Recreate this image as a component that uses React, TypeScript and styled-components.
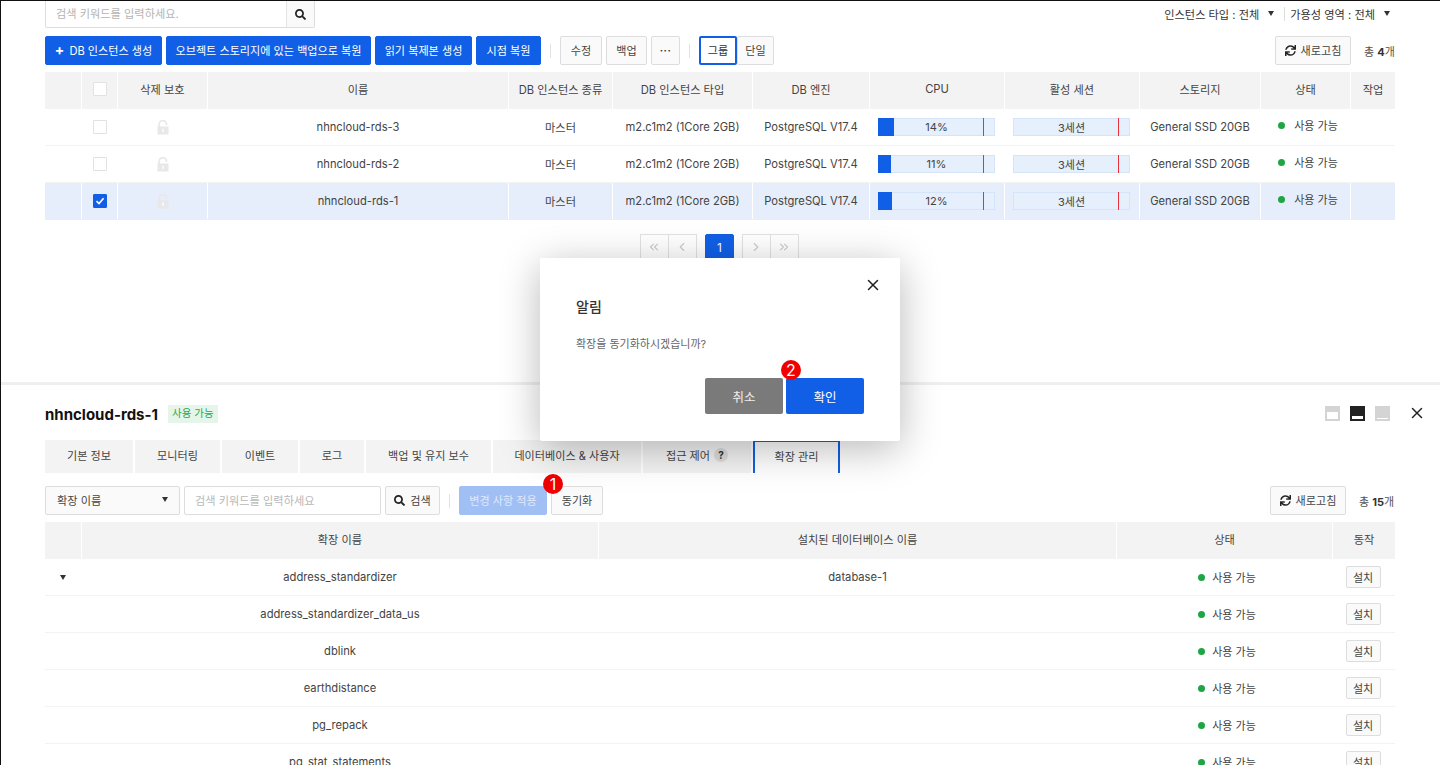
import React from 'react';
import styled, { createGlobalStyle } from 'styled-components';
import { FaSearch, FaSync } from 'react-icons/fa';
import { ChevronLeft, ChevronRight, ChevronsLeft, ChevronsRight, X } from 'lucide-react';

const GlobalStyle = createGlobalStyle`
html, body {
  margin: 0;
  padding: 0;
  background: #fff;
  overflow: hidden;
}
* {
  box-sizing: border-box;
}
body, button, input {
  font-family: Inter, "Noto Sans CJK KR", "Noto Sans", sans-serif;
  font-size: 12px;
  color: #444;
}
`;

const BLUE = '#115fe6';
const INSTANCE_COLS = '37px 36px 90px 301px 104px 140px 117px 135px 135px 121px 90px 44px';
const EXT_COLS = '37px 517px 518px 216px 62px';

const Page = styled.div`
position: relative;
width: 1440px;
height: 765px;
overflow: hidden;
border-top: 1px solid #111;
border-left: 1px solid #111;
`;

const TopPanel = styled.section`
height: 381px;
padding: 0 45px 0 44px;
`;

const SearchRow = styled.div`
display: flex;
align-items: center;
justify-content: space-between;
height: 27px;
margin-bottom: 8px;
`;

const SearchBox = styled.div`
display: flex;
width: 270px;
height: 27px;
border: 1px solid #ddd;
border-top: none;
border-radius: 0 0 2px 2px;
>input{
  flex: 1;
  min-width: 0;
  border: none;
  outline: none;
  padding: 0 10px;
  background: none;
  font-size: 11.2px;
  &::placeholder{
    color: #b4b4b4;
  }
}
>button{
  width: 28px;
  border: none;
  border-left: 1px solid #e4e4e4;
  background: #fafafa;
  display: flex;
  align-items: center;
  justify-content: center;
  color: #222;
  padding: 0;
}
`;

const Filters = styled.div`
display: flex;
align-items: center;
padding: 0 5px 2px 0;
font-size: 11.2px;
color: #333;
>span{
  display: flex;
  align-items: center;
  gap: 9px;
}
>i{
  width: 1px;
  height: 14px;
  background: #ddd;
  margin: 0 5px 0 10px;
}
`;

const Caret = styled.b`
display: inline-block;
width: 0;
height: 0;
border-left: 3.5px solid transparent;
border-right: 3.5px solid transparent;
border-top: 5px solid #333;
`;

const Toolbar = styled.div`
display: flex;
align-items: center;
gap: 4px;
height: 29px;
margin-bottom: 7px;
`;

const Btn = styled.button<{ $w: number }>`
position: relative;
flex: none;
width: ${p => p.$w}px;
height: 29px;
padding: 0 0 1px;
display: flex;
align-items: center;
justify-content: center;
gap: 5px;
background: #fafafa;
border: 1px solid #ddd;
border-radius: 2px;
font-size: 11.1px;
color: #444;
white-space: nowrap;
`;

const PrimaryBtn = styled(Btn)`
background: ${BLUE};
border-color: ${BLUE};
color: #fff;
>strong{
  font-size: 14px;
  font-weight: 700;
  line-height: 1;
}
`;

const DisabledBtn = styled(Btn)`
background: #a0bff5;
border-color: #a0bff5;
color: #dfe9fb;
`;

const ActiveBtn = styled(Btn)`
background: #fff;
border: 2px solid ${BLUE};
color: #333;
`;

const Dots = styled.span`
font-size: 10px;
font-weight: 700;
letter-spacing: 0.5px;
color: #333;
`;

const Divider = styled.i`
flex: none;
width: 1px;
height: 14px;
margin: 0 5px;
background: #e2e2e2;
`;

const ToggleGroup = styled.div`
display: flex;
`;

const RightGroup = styled.div`
margin-left: auto;
display: flex;
align-items: center;
`;

const Total = styled.span<{ $w: number }>`
width: ${p => p.$w}px;
margin-left: 13px;
font-size: 11px;
white-space: nowrap;
color: #555;
>b{
  font-weight: 700;
  color: #333;
}
`;

const Row = styled.div<{ $cols: string; $selected?: boolean }>`
display: grid;
grid-template-columns: ${p => p.$cols};
height: 37px;
background: ${p => (p.$selected ? '#e6eefb' : '#fff')};
border-bottom: 1px solid ${p => (p.$selected ? '#e6eefb' : '#f3f3f3')};
`;

const Cell = styled.div`
display: flex;
align-items: center;
justify-content: center;
border-right: 1px solid #fff;
font-size: 11.2px;
color: #444;
white-space: nowrap;
min-width: 0;
&:last-child{
  border-right: none;
}
`;

const HeadRow = styled(Row)`
background: #f3f3f3;
border-bottom: none;
${Cell}{
  padding-bottom: 3px;
}
`;

const BarCell = styled(Cell)`
padding: 0 9px 0 8px;
`;

const Check = styled.span<{ $checked?: boolean }>`
width: 14px;
height: 14px;
display: flex;
align-items: center;
justify-content: center;
background: ${p => (p.$checked ? BLUE : '#fff')};
border: 1px solid ${p => (p.$checked ? BLUE : '#e2e2e2')};
border-radius: 1px;
`;

const Bar = styled.div`
position: relative;
width: 100%;
height: 18px;
background: #e6effc;
border: 1px solid #d6e4fa;
display: flex;
align-items: center;
justify-content: center;
font-size: 11px;
color: #444;
&::after{
  content: '';
  position: absolute;
  top: -1px;
  bottom: -1px;
  right: 10px;
  width: 1px;
  background: #e8313a;
}
`;

const BarFill = styled.div`
position: absolute;
left: -1px;
top: -1px;
bottom: -1px;
background: ${BLUE};
`;

const Status = styled.span<{ $lift?: boolean }>`
display: flex;
align-items: center;
gap: ${p => (p.$lift ? '9px' : '7px')};
font-size: 11px;
margin-left: 5px;
margin-top: ${p => (p.$lift ? '-4px' : '0')};
&::before{
  content: '';
  width: 7px;
  height: 7px;
  border-radius: 50%;
  background: #1fa544;
}
`;

const Pager = styled.nav`
display: flex;
justify-content: center;
gap: 8px;
margin-top: 14px;
padding-right: 1px;
`;

const PagerGroup = styled.div`
display: flex;
>button{
  width: 28.5px;
  height: 26px;
  padding: 0;
  display: flex;
  align-items: center;
  justify-content: center;
  background: #fff;
  border: 1px solid #e2e2e2;
  color: #ccc;
  &+button{
    border-left: none;
  }
}
`;

const PageNow = styled.button`
width: 29px;
height: 26px;
padding: 0;
background: ${BLUE};
border: 1px solid ${BLUE};
border-radius: 2px;
color: #fff;
font-size: 12px;
`;

const BottomPanel = styled.section`
border-top: 3px solid #efefef;
padding: 20px 45px 0 44px;
`;

const TitleRow = styled.div`
display: flex;
align-items: center;
height: 18px;
margin-bottom: 17px;
>h2{
  margin: 0;
  font-size: 15px;
  font-weight: 700;
  color: #111;
}
`;

const Tag = styled.span`
margin-left: 10px;
padding: 0 4px;
height: 18px;
line-height: 18px;
background: #e6f5ea;
color: #27a94d;
font-size: 10.5px;
`;

const ViewIcons = styled.div`
margin-left: auto;
display: flex;
align-items: center;
gap: 10px;
margin-right: -31px;
padding-bottom: 2px;
>svg:last-child{
  margin-left: 8px;
}
`;

const Tabs = styled.div`
display: flex;
gap: 2px;
height: 33px;
margin-bottom: 13px;
`;

const Tab = styled.div<{ $w: number; $active?: boolean }>`
width: ${p => p.$w}px;
display: flex;
align-items: center;
justify-content: center;
gap: 4px;
padding-bottom: 4px;
font-size: 11.1px;
color: #444;
background: ${p => (p.$active ? '#fff' : '#f3f3f3')};
border: ${p => (p.$active ? `2px solid ${BLUE}` : 'none')};
border-bottom: none;
`;

const Help = styled.span`
width: 14px;
height: 14px;
border-radius: 50%;
background: #ddd;
font-size: 10px;
font-weight: 700;
text-align: center;
line-height: 14px;
color: #333;
`;

const SelectBox = styled.div`
flex: none;
width: 135px;
height: 29px;
padding: 0 11px 2px;
display: flex;
align-items: center;
justify-content: space-between;
background: #fafafa;
border: 1px solid #ddd;
border-radius: 2px;
font-size: 11.2px;
`;

const KeywordInput = styled.input`
flex: none;
width: 197px;
height: 29px;
padding: 0 10px;
border: 1px solid #ddd;
border-radius: 2px;
outline: none;
font-size: 11.2px;
&::placeholder{
  color: #b8b8b8;
}
`;

const Marker = styled.span<{ $left: number; $top: number }>`
position: absolute;
left: ${p => p.$left}px;
top: ${p => p.$top}px;
width: 20px;
height: 20px;
border-radius: 50%;
background: #f00000;
color: #fff;
font-size: 16px;
line-height: 20px;
text-align: center;
`;

const InstallBtn = styled.button`
width: 35px;
height: 22px;
margin-right: 2px;
padding: 0 0 1px;
background: #fafafa;
border: 1px solid #ddd;
border-radius: 2px;
font-size: 11px;
color: #444;
`;

const Dialog = styled.div`
position: absolute;
left: 539px;
top: 257px;
width: 360px;
height: 183px;
padding: 39px 36px 27px;
background: #fff;
border-radius: 2px;
box-shadow: 0 8px 40px rgba(0, 0, 0, 0.28);
>h3{
  margin: 0 0 18px;
  font-size: 14px;
  line-height: 20px;
  font-weight: 500;
  color: #333;
}
>p{
  margin: 0 0 25px;
  font-size: 11px;
  line-height: 18px;
  color: #666;
}
`;

const CloseBtn = styled.button`
position: absolute;
right: 18px;
top: 18px;
width: 18px;
height: 18px;
padding: 0;
border: none;
background: none;
color: #222;
display: flex;
`;

const DialogActions = styled.div`
display: flex;
justify-content: flex-end;
gap: 3px;
`;

const DialogBtn = styled.button<{ $primary?: boolean }>`
position: relative;
width: 78px;
height: 36px;
padding: 0;
border: none;
border-radius: 2px;
background: ${p => (p.$primary ? BLUE : '#7a7a7a')};
color: ${p => (p.$primary ? '#fff' : '#eee')};
font-size: 12.5px;
`;

const LockIcon = () => (
  <svg width="12" height="15" viewBox="0 0 12 15">
    <path d="M2.2 7V4.2a3.6 3.6 0 0 1 7.2 0V5" fill="none" stroke="#e8e8e8" strokeWidth="1.8" />
    <rect x="0.5" y="6.5" width="11" height="8" fill="#e8e8e8" />
    <rect x="5.3" y="8.8" width="1.4" height="3" fill="#fff" />
  </svg>
);

const CheckMark = () => (
  <svg width="10" height="10" viewBox="0 0 10 10">
    <path d="M1.5 5.2 4 7.6 8.6 2.2" fill="none" stroke="#fff" strokeWidth="1.6" />
  </svg>
);

const PanelIcon = ({ back, bar, y, h }: { back: string; bar: string; y: number; h: number }) => (
  <svg width="15" height="15" viewBox="0 0 15 15">
    <rect width="15" height="15" fill={back} />
    <rect x="2" y={y} width="11" height={h} fill={bar} />
  </svg>
);

const instances = [
  { name: 'nhncloud-rds-3', cpu: 14 },
  { name: 'nhncloud-rds-2', cpu: 11 },
  { name: 'nhncloud-rds-1', cpu: 12, selected: true },
];

const extensions = [
  { name: 'address_standardizer', db: 'database-1', open: true },
  { name: 'address_standardizer_data_us' },
  { name: 'dblink' },
  { name: 'earthdistance' },
  { name: 'pg_repack' },
  { name: 'pg_stat_statements' },
];

const instanceHeads = ['삭제 보호', '이름', 'DB 인스턴스 종류', 'DB 인스턴스 타입', 'DB 엔진', 'CPU', '활성 세션', '스토리지', '상태', '작업'];
const tabs: [string, number][] = [['기본 정보', 88], ['모니터링', 85], ['이벤트', 76], ['로그', 64], ['백업 및 유지 보수', 125], ['데이터베이스 & 사용자', 148]];

function App() {
  return (
    <Page>
      <GlobalStyle />
      <TopPanel>
        <SearchRow>
          <SearchBox>
            <input placeholder="검색 키워드를 입력하세요." />
            <button><FaSearch size={11} /></button>
          </SearchBox>
          <Filters>
            <span>인스턴스 타입 : 전체 <Caret /></span>
            <i />
            <span>가용성 영역 : 전체 <Caret /></span>
          </Filters>
        </SearchRow>

        <Toolbar>
          <PrimaryBtn $w={117}><strong>+</strong>DB 인스턴스 생성</PrimaryBtn>
          <PrimaryBtn $w={205}>오브젝트 스토리지에 있는 백업으로 복원</PrimaryBtn>
          <PrimaryBtn $w={97}>읽기 복제본 생성</PrimaryBtn>
          <PrimaryBtn $w={65}>시점 복원</PrimaryBtn>
          <Divider />
          <Btn $w={42}>수정</Btn>
          <Btn $w={41}>백업</Btn>
          <Btn $w={29}><Dots>···</Dots></Btn>
          <Divider />
          <ToggleGroup>
            <ActiveBtn $w={38}>그룹</ActiveBtn>
            <Btn $w={37}>단일</Btn>
          </ToggleGroup>
          <RightGroup>
            <Btn $w={76}><FaSync size={11} color="#222" />새로고침</Btn>
            <Total $w={31}>총 <b>4</b>개</Total>
          </RightGroup>
        </Toolbar>

        <HeadRow $cols={INSTANCE_COLS}>
          <Cell />
          <Cell><Check /></Cell>
          {instanceHeads.map(h => <Cell key={h}>{h}</Cell>)}
        </HeadRow>
        {instances.map(item => (
          <Row key={item.name} $cols={INSTANCE_COLS} $selected={item.selected}>
            <Cell />
            <Cell><Check $checked={item.selected}>{item.selected && <CheckMark />}</Check></Cell>
            <Cell><LockIcon /></Cell>
            <Cell>{item.name}</Cell>
            <Cell>마스터</Cell>
            <Cell>m2.c1m2 (1Core 2GB)</Cell>
            <Cell>PostgreSQL V17.4</Cell>
            <BarCell>
              <Bar><BarFill style={{ width: `${item.cpu}%` }} />{item.cpu}%</Bar>
            </BarCell>
            <BarCell>
              <Bar>3세션</Bar>
            </BarCell>
            <Cell>General SSD 20GB</Cell>
            <Cell><Status $lift>사용 가능</Status></Cell>
            <Cell />
          </Row>
        ))}

        <Pager>
          <PagerGroup>
            <button><ChevronsLeft size={14} /></button>
            <button><ChevronLeft size={14} /></button>
          </PagerGroup>
          <PageNow>1</PageNow>
          <PagerGroup>
            <button><ChevronRight size={14} /></button>
            <button><ChevronsRight size={14} /></button>
          </PagerGroup>
        </Pager>
      </TopPanel>

      <BottomPanel>
        <TitleRow>
          <h2>nhncloud-rds-1</h2>
          <Tag>사용 가능</Tag>
          <ViewIcons>
            <PanelIcon back="#d4d4d4" bar="#fff" y={6} h={7} />
            <PanelIcon back="#222" bar="#fff" y={10} h={3} />
            <PanelIcon back="#d4d4d4" bar="#fff" y={12} h={1} />
            <X size={18} color="#222" />
          </ViewIcons>
        </TitleRow>

        <Tabs>
          {tabs.map(([label, w]) => <Tab key={label} $w={w}>{label}</Tab>)}
          <Tab $w={108}>접근 제어 <Help>?</Help></Tab>
          <Tab $w={87} $active>확장 관리</Tab>
        </Tabs>

        <Toolbar>
          <SelectBox>확장 이름 <Caret /></SelectBox>
          <KeywordInput placeholder="검색 키워드를 입력하세요" />
          <Btn $w={55}><FaSearch size={11} color="#222" />검색</Btn>
          <Divider />
          <DisabledBtn $w={88}>변경 사항 적용</DisabledBtn>
          <Btn $w={52}>동기화<Marker $left={-9} $top={-13}>1</Marker></Btn>
          <RightGroup>
            <Btn $w={76}><FaSync size={11} color="#222" />새로고침</Btn>
            <Total $w={36}>총 <b>15</b>개</Total>
          </RightGroup>
        </Toolbar>

        <HeadRow $cols={EXT_COLS}>
          <Cell />
          <Cell>확장 이름</Cell>
          <Cell>설치된 데이터베이스 이름</Cell>
          <Cell>상태</Cell>
          <Cell>동작</Cell>
        </HeadRow>
        {extensions.map(ext => (
          <Row key={ext.name} $cols={EXT_COLS}>
            <Cell>{ext.open && <Caret />}</Cell>
            <Cell>{ext.name}</Cell>
            <Cell>{ext.db}</Cell>
            <Cell><Status>사용 가능</Status></Cell>
            <Cell><InstallBtn>설치</InstallBtn></Cell>
          </Row>
        ))}
      </BottomPanel>

      <Dialog>
        <CloseBtn><X size={18} /></CloseBtn>
        <h3>알림</h3>
        <p>확장을 동기화하시겠습니까?</p>
        <DialogActions>
          <DialogBtn>취소</DialogBtn>
          <DialogBtn $primary>확인<Marker $left={-5} $top={-18}>2</Marker></DialogBtn>
        </DialogActions>
      </Dialog>
    </Page>
  );
}

export default App;
